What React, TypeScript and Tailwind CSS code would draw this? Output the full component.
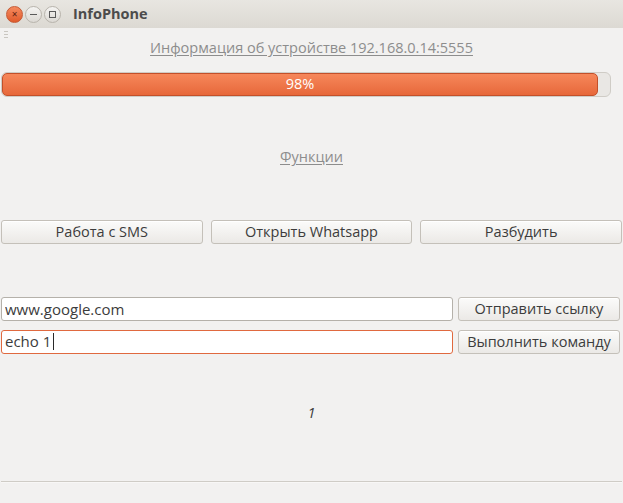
import { useState } from 'react';

const btn =
  'h-6 rounded-[3px] border border-[#c4c0b9] bg-gradient-to-b from-[#fbfbfa] to-[#ebe9e6] text-[14.5px] text-[#3c3c3c] shadow-[inset_0_1px_0_#ffffff]';

export default function App() {
  const [url, setUrl] = useState('www.google.com');

  return (
    <div className="flex h-[503px] w-[623px] flex-col bg-[#f2f1f0] font-['Open_Sans',sans-serif] text-[14.5px] text-[#3c3c3c]">
      {/* title bar */}
      <div className="flex h-[28px] items-center bg-gradient-to-b from-[#e8e6e1] to-[#dcd9d3] pl-[6px]">
        <div className="flex items-center gap-[2px]">
          <div className="flex h-[17px] w-[17px] items-center justify-center rounded-full border border-[#c55a35] bg-gradient-to-b from-[#f58a5e] to-[#e05a2a] text-[10px] leading-none text-[#5a2010]">
            ×
          </div>
          <div className="flex h-[17px] w-[17px] items-center justify-center rounded-full border border-[#b8b4ac] bg-gradient-to-b from-[#f5f4f2] to-[#dcd9d4]">
            <div className="h-[1px] w-[7px] bg-[#5a5a5a]" />
          </div>
          <div className="flex h-[17px] w-[17px] items-center justify-center rounded-full border border-[#b8b4ac] bg-gradient-to-b from-[#f5f4f2] to-[#dcd9d4]">
            <div className="h-[7px] w-[7px] border border-[#5a5a5a]" />
          </div>
        </div>
        <div className="ml-[12px] text-[14.5px] font-bold text-[#4c4c4c]">InfoPhone</div>
      </div>

      {/* body */}
      <div className="relative flex flex-1 flex-col px-[1px]">
        <div className="absolute left-[4px] top-[3px] flex flex-col gap-[2px]">
          <div className="h-[1px] w-[4px] bg-[#c9c6c0]" />
          <div className="h-[1px] w-[4px] bg-[#c9c6c0]" />
          <div className="h-[1px] w-[4px] bg-[#c9c6c0]" />
        </div>

        <div className="mt-[9px] text-center text-[#8d8d8d] underline underline-offset-2">
          Информация об устройстве 192.168.0.14:5555
        </div>

        <div className="mt-[13px] mr-[11px] h-[25px] rounded-[6px] border border-[#cfccc6] bg-[#e9e7e4]">
          <div className="flex h-full w-[596px] items-center justify-center rounded-[5px] border border-[#c3502a] bg-gradient-to-b from-[#f6875a] to-[#e7683a] text-white">
            98%
          </div>
        </div>

        <div className="mt-[49px] text-center text-[#8d8d8d] underline underline-offset-2">Функции</div>

        <div className="mt-[52px] grid grid-cols-3 gap-[8px]">
          <button className={btn}>Работа с SMS</button>
          <button className={btn}>Открыть Whatsapp</button>
          <button className={btn}>Разбудить</button>
        </div>

        <div className="mt-[53px] flex flex-col gap-[9px]">
          <div className="flex gap-[5px]">
            <input
              value={url}
              onChange={e => setUrl(e.target.value)}
              className="h-6 w-[452px] rounded-[3px] border border-[#b5b1aa] bg-white px-[3px] text-[15px] text-[#3c3c3c] outline-none"
            />
            <button className={`${btn} w-[162px]`}>Отправить ссылку</button>
          </div>
          <div className="flex gap-[5px]">
            <div className="flex h-6 w-[452px] items-center rounded-[3px] border border-[#e0693f] bg-white px-[3px] text-[15px] text-[#3c3c3c]">
              echo 1<span className="ml-[2px] h-[17px] w-[1px] bg-[#2a2a2a]" />
            </div>
            <button className={`${btn} w-[162px]`}>Выполнить команду</button>
          </div>
        </div>

        <div className="mt-[48px] text-center italic text-[#3c3c3c]">1</div>

        <div className="mt-auto mb-[20px] h-[2px] border-t border-[#cfccc6] bg-[#f8f7f6]" />
      </div>
    </div>
  );
}
